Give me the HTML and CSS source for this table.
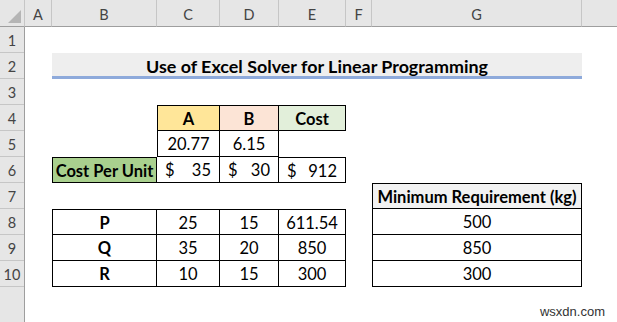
FILE: index.html
```html
<!DOCTYPE html>
<html>
<head>
<meta charset="utf-8">
<link rel="stylesheet" href="styles.css">
</head>
<body>
<div class="sheet">
  <div class="corner"><span class="tri"></span></div>
  <div class="ch">A</div>
  <div class="ch">B</div>
  <div class="ch">C</div>
  <div class="ch">D</div>
  <div class="ch">E</div>
  <div class="ch">F</div>
  <div class="ch">G</div>
  <div class="ch ch-last"></div>

  <div class="rowheads">
    <div class="rh">1</div>
    <div class="rh">2</div>
    <div class="rh">3</div>
    <div class="rh">4</div>
    <div class="rh">5</div>
    <div class="rh">6</div>
    <div class="rh">7</div>
    <div class="rh">8</div>
    <div class="rh">9</div>
    <div class="rh">10</div>
    <div class="rh rh-fill"></div>
  </div>

  <div class="title">Use of Excel Solver for Linear Programming</div>

  <div class="cell cC r4 bd bl bt bold fill-a">A</div>
  <div class="cell cD r4 bd bt bold fill-b">B</div>
  <div class="cell cE r4 bd bt bold fill-c">Cost</div>
  <div class="cell cC r5 bd bl">20.77</div>
  <div class="cell cD r5 bd">6.15</div>
  <div class="cell cB r6 bd bl bt bold fill-d">Cost Per Unit</div>
  <div class="cell cC r6 bd acc"><span>$</span><span>35</span></div>
  <div class="cell cD r6 bd acc"><span>$</span><span>30</span></div>
  <div class="cell cE r6 bd bt acc"><span>$</span><span>912</span></div>

  <div class="cell cG r7 bd bl bt bold fill-e">Minimum Requirement (kg)</div>

  <div class="cell cB r8 bd bl bt bold">P</div>
  <div class="cell cC r8 bd bt">25</div>
  <div class="cell cD r8 bd bt">15</div>
  <div class="cell cE r8 bd bt">611.54</div>
  <div class="cell cG r8 bd bl">500</div>

  <div class="cell cB r9 bd bl bold">Q</div>
  <div class="cell cC r9 bd">35</div>
  <div class="cell cD r9 bd">20</div>
  <div class="cell cE r9 bd">850</div>
  <div class="cell cG r9 bd bl">850</div>

  <div class="cell cB r10 bd bl bold">R</div>
  <div class="cell cC r10 bd">10</div>
  <div class="cell cD r10 bd">15</div>
  <div class="cell cE r10 bd">300</div>
  <div class="cell cG r10 bd bl">300</div>

  <div class="watermark">wsxdn.com</div>
</div>
</body>
</html>
```
FILE: styles.css
```css
html, body {
  margin: 0;
  padding: 0;
  background: #ffffff;
}

.sheet {
  position: relative;
  width: 617px;
  height: 322px;
  display: grid;
  grid-template-columns: 25px 27px 105px 63px 59px 67px 26px 210px 1fr;
  grid-template-rows: 27px repeat(10, 26px) 1fr;
  font-family: Lato, "Open Sans", sans-serif;
  font-size: 16.5px;
  color: #000;
  background: #fff;
  overflow: hidden;
}

.corner {
  position: relative;
  background: #e6e6e6;
  border-right: 1px solid #c6c6c6;
  border-bottom: 1px solid #9e9e9e;
  box-sizing: border-box;
}

.tri {
  position: absolute;
  right: 3px;
  bottom: 3px;
  width: 0;
  height: 0;
  border-left: 13px solid transparent;
  border-bottom: 13px solid #b5b5b5;
}

.ch {
  background: #e6e6e6;
  border-right: 1px solid #c6c6c6;
  border-bottom: 1px solid #9e9e9e;
  box-sizing: border-box;
  display: flex;
  align-items: center;
  justify-content: center;
  color: #444;
  font-size: 14.5px;
  padding-top: 2px;
}

.ch-last {
  border-right: none;
}

.rowheads {
  grid-column: 1;
  grid-row: 2 / -1;
  display: flex;
  flex-direction: column;
  background: #e6e6e6;
  border-right: 1px solid #9e9e9e;
  box-sizing: border-box;
}

.rh {
  height: 26px;
  flex: none;
  box-sizing: border-box;
  border-bottom: 1px solid #c6c6c6;
  display: flex;
  align-items: center;
  justify-content: center;
  color: #444;
  font-size: 14.5px;
  padding-top: 2px;
}

.rh-fill {
  flex: 1;
  border-bottom: none;
}

.title {
  grid-column: 3 / 9;
  grid-row: 3;
  background: #eeeeee;
  border-bottom: 3px solid #8eaadb;
  box-sizing: border-box;
  display: flex;
  align-items: center;
  justify-content: center;
  font-weight: 700;
  font-size: 17.9px;
  padding-top: 2px;
}

.cell {
  box-sizing: border-box;
  display: flex;
  align-items: center;
  justify-content: center;
  white-space: nowrap;
  padding-top: 1px;
}

.bd {
  border-right: 1px solid #000;
  border-bottom: 1px solid #000;
}
.bl { border-left: 1px solid #000; }
.bt { border-top: 1px solid #000; }

.bold { font-weight: 700; }

.acc {
  justify-content: space-between;
  padding: 1px 8px 0 8px;
}

.fill-a { background: #ffe699; }
.fill-b { background: #fce4d6; }
.fill-c { background: #e2efda; }
.fill-d { background: #a9d08e; }
.fill-e { background: #f2f2f2; }

.cB { grid-column: 3; }
.cC { grid-column: 4; }
.cD { grid-column: 5; }
.cE { grid-column: 6; }
.cG { grid-column: 8; }

.r4 { grid-row: 5; }
.r5 { grid-row: 6; }
.r6 { grid-row: 7; }
.r7 { grid-row: 8; }
.r8 { grid-row: 9; }
.r9 { grid-row: 10; }
.r10 { grid-row: 11; }

.watermark {
  position: absolute;
  right: 12px;
  bottom: 3px;
  font-family: "Liberation Sans", Arial, sans-serif;
  font-size: 13px;
  color: #333;
}
```
